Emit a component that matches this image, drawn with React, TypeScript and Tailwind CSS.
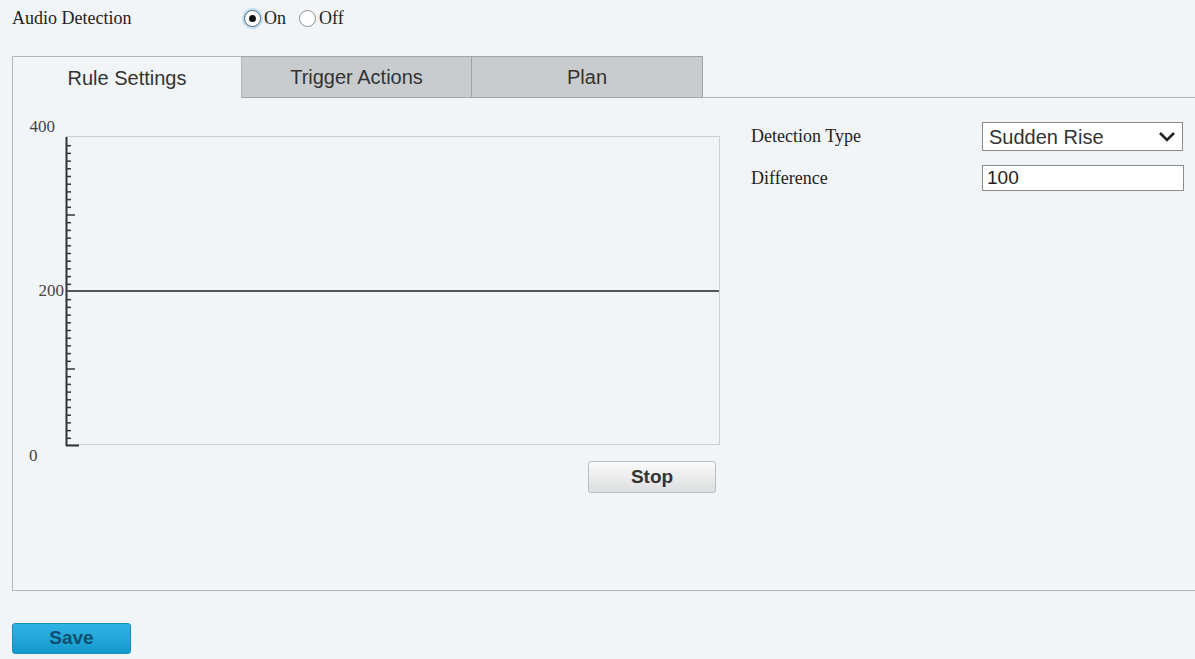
import React from "react";

const serif = { fontFamily: '"Liberation Serif", "Times New Roman", serif' };
const sans = { fontFamily: '"Liberation Sans", Arial, sans-serif' };

function Radio({ checked }: { checked?: boolean }) {
  return (
    <span
      className={
        "inline-flex items-center justify-center w-[17px] h-[17px] rounded-full border bg-white " +
        (checked ? "border-[#5a6670] shadow-[0_0_0_2px_#bfe0f3]" : "border-[#8a8f94]")
      }
    >
      {checked && <span className="w-[7px] h-[7px] rounded-full bg-[#111]" />}
    </span>
  );
}

function Axis() {
  const ticks: React.ReactNode[] = [];
  const top = 1;
  const bottom = 309;
  const n = 40;
  for (let i = 1; i < n; i++) {
    const y = top + ((bottom - top) * i) / n;
    if (i === 20) continue;
    const long = i === 10 || i === 30;
    ticks.push(<line key={i} x1={0} x2={long ? 9 : 5} y1={y} y2={y} stroke="#333" strokeWidth={1.5} />);
  }
  return (
    <svg className="absolute left-[-2px] top-0" width="16" height="311" viewBox="0 0 16 311">
      <g transform="translate(1,0)">
        <line x1={0.5} x2={0.5} y1={0} y2={309} stroke="#333" strokeWidth={2} />
        <line x1={0} x2={13} y1={308.5} y2={308.5} stroke="#333" strokeWidth={2} />
        {ticks}
      </g>
    </svg>
  );
}

export default function App() {
  return (
    <div className="w-[1195px] h-[659px] bg-[#f2f5f8] overflow-hidden text-[#222]">
      {/* top row */}
      <div className="flex items-center h-[36px] pl-[12px]">
        <div className="w-[232px] text-[18px]" style={serif}>
          Audio Detection
        </div>
        <div className="flex items-center text-[18px]" style={serif}>
          <Radio checked />
          <span className="ml-[3px] mr-[13px]">On</span>
          <Radio />
          <span className="ml-[3px]">Off</span>
        </div>
      </div>

      {/* tabs */}
      <div className="flex mt-[20px] pl-[12px] h-[42px]" style={sans}>
        <div className="w-[230px] h-[42px] border border-b-0 border-[#b4b8bb] flex items-center justify-center text-[20px] text-[#333] bg-[#f2f5f8]">
          Rule Settings
        </div>
        <div className="w-[230px] h-[42px] border border-l-0 border-[#a2a6a9] bg-[#c8cccf] flex items-center justify-center text-[20px] text-[#333]">
          Trigger Actions
        </div>
        <div className="w-[231px] h-[42px] border border-l-0 border-[#a2a6a9] bg-[#c8cccf] flex items-center justify-center text-[20px] text-[#333]">
          Plan
        </div>
        <div className="flex-1 border-b border-[#b4b8bb]" />
      </div>

      {/* panel */}
      <div className="ml-[12px] h-[493px] border-l border-b border-[#b4b8bb] flex">
        <div className="w-[708px] pl-[53px] pt-[38px]">
          <div className="relative w-[654px] h-[309px] border border-[#cdd1d4]">
            <Axis />
            <div className="absolute left-0 right-0 top-[153px] h-[2px] bg-[#555]" />
            <span className="absolute right-[664px] top-[-23px] text-[17px] text-[#444]" style={serif}>400</span>
            <span className="absolute right-[655px] top-[141px] text-[17px] text-[#444]" style={serif}>200</span>
            <span className="absolute left-[-38px] top-[306px] text-[17px] text-[#444]" style={serif}>0</span>
          </div>
          <div className="w-[654px] flex justify-end mt-[16px] pr-[4px]">
            <button
              className="w-[128px] h-[32px] rounded-[3px] border border-[#b9bcbf] bg-gradient-to-b from-[#fafafa] to-[#dcdedf] text-[19px] font-bold text-[#333] flex items-center justify-center"
              style={sans}
            >
              Stop
            </button>
          </div>
        </div>
        <div className="pl-[30px] pt-[24px]">
          <div className="flex items-center h-[29px]">
            <div className="w-[231px] text-[18px]" style={serif}>Detection Type</div>
            <div
              className="w-[201px] h-[29px] bg-white border border-[#8c8c8c] flex items-center justify-between pl-[6px] pr-[6px] text-[20px] text-[#333]"
              style={sans}
            >
              <span>Sudden Rise</span>
              <svg width="18" height="12" viewBox="0 0 18 12">
                <path d="M2 2 L9 9 L16 2" fill="none" stroke="#222" strokeWidth="2.6" />
              </svg>
            </div>
          </div>
          <div className="flex items-center h-[26px] mt-[14px]">
            <div className="w-[231px] text-[18px]" style={serif}>Difference</div>
            <div
              className="w-[202px] h-[26px] bg-white border border-[#8c8c8c] flex items-center pl-[4px] text-[19px] text-[#222]"
              style={sans}
            >
              100
            </div>
          </div>
        </div>
      </div>

      {/* save */}
      <div className="pl-[12px] mt-[32px]">
        <button
          className="w-[119px] h-[31px] rounded-[3px] border border-[#1a8fbd] bg-gradient-to-b from-[#2fb3e4] to-[#1499cc] text-[19px] font-bold text-[#0e4f70] flex items-center justify-center"
          style={sans}
        >
          Save
        </button>
      </div>
    </div>
  );
}
